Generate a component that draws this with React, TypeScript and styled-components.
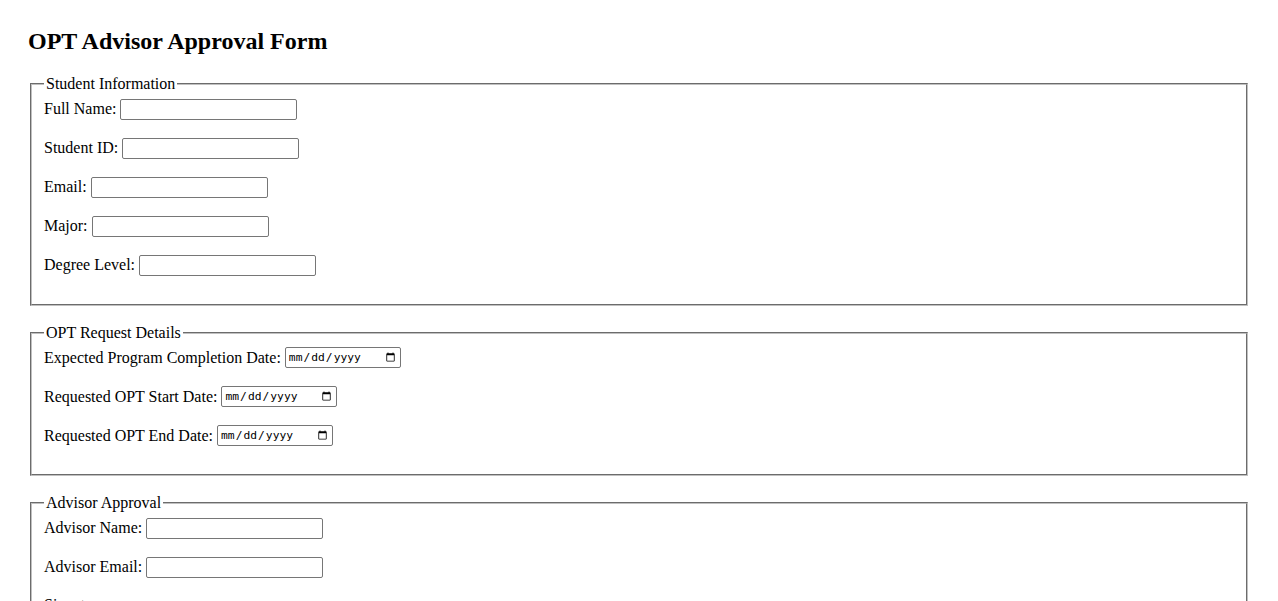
import React from "react";
import styled, { createGlobalStyle } from "styled-components";

const GlobalStyle = createGlobalStyle`
  body {
    margin: 0;
    background: #ffffff;
    color: #000000;
    font-family: "Liberation Serif", "Times New Roman", serif;
    font-size: 16px;
  }
`;

const Page = styled.div`
  padding: 28px;
`;

const Title = styled.h2`
  margin: 0 0 20px;
  font-size: 24px;
  font-weight: bold;
`;

const Section = styled.fieldset`
  margin: 0 2px 18px;
  padding: 5.6px 12px 10px;
  border: 2px groove rgb(192, 192, 192);
`;

const Legend = styled.legend`
  padding: 0 2px;
`;

const Row = styled.label`
  display: flex;
  align-items: center;
  gap: 4px;
  height: 21px;
  margin-bottom: 18px;
`;

const StackedRow = styled.label`
  display: flex;
  flex-direction: column;
  align-items: flex-start;
  gap: 18px;
  margin-bottom: 18px;
`;

const TextInput = styled.input`
  box-sizing: border-box;
  width: 177px;
  height: 21px;
  padding: 1px 2px;
  border: 1px solid #767676;
  border-radius: 2px;
  font-family: "Liberation Sans", Arial, sans-serif;
  font-size: 13.33px;
`;

const DateInput = styled(TextInput).attrs({ type: "date" })`
  width: 116px;
  font-family: "DejaVu Sans Mono", "Liberation Mono", monospace;
  font-size: 11.3px;
`;

const TextArea = styled.textarea`
  width: 300px;
  height: 60px;
  border: 1px solid #767676;
  border-radius: 2px;
`;

type Field = { label: string; kind?: "text" | "email" | "date" | "area" };

const sections: { title: string; fields: Field[] }[] = [
  {
    title: "Student Information",
    fields: [
      { label: "Full Name:" },
      { label: "Student ID:" },
      { label: "Email:", kind: "email" },
      { label: "Major:" },
      { label: "Degree Level:" },
    ],
  },
  {
    title: "OPT Request Details",
    fields: [
      { label: "Expected Program Completion Date:", kind: "date" },
      { label: "Requested OPT Start Date:", kind: "date" },
      { label: "Requested OPT End Date:", kind: "date" },
    ],
  },
  {
    title: "Advisor Approval",
    fields: [
      { label: "Advisor Name:" },
      { label: "Advisor Email:", kind: "email" },
      { label: "Signature:", kind: "area" },
    ],
  },
];

const App = () => {
  return (
    <Page>
      <GlobalStyle />
      <Title>OPT Advisor Approval Form</Title>
      <form>
        {sections.map((section) => (
          <Section key={section.title}>
            <Legend>{section.title}</Legend>
            {section.fields.map((field) =>
              field.kind === "area" ? (
                <StackedRow key={field.label}>
                  {field.label}
                  <TextArea />
                </StackedRow>
              ) : (
                <Row key={field.label}>
                  {field.label}
                  {field.kind === "date" ? (
                    <DateInput />
                  ) : (
                    <TextInput type={field.kind || "text"} />
                  )}
                </Row>
              )
            )}
          </Section>
        ))}
      </form>
    </Page>
  );
};

export default App;
